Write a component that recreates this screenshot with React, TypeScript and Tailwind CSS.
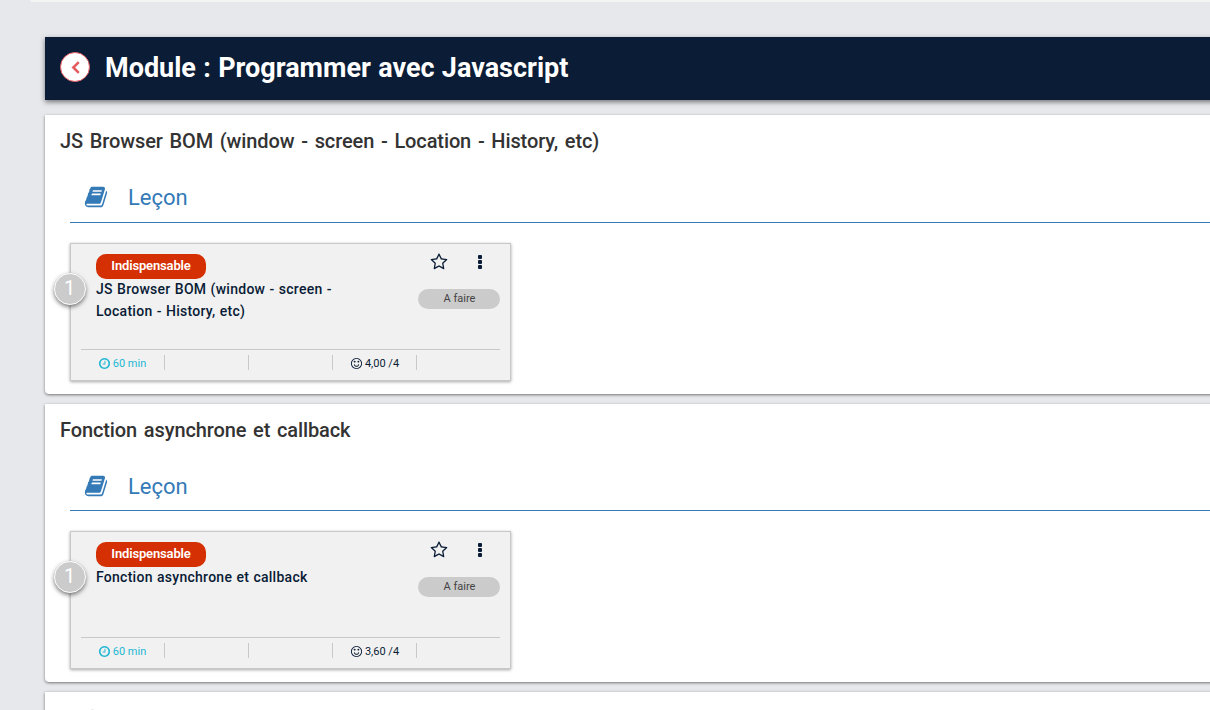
import React from "react";

const ICONS = {
  book: "M1703 478q40 57 18 129l-275 906q-19 64-76.5 107.5t-122.5 43.5h-923q-77 0-148.5-53.5t-99.5-131.5q-24-67-2-127 0-4 3-27t4-37q1-8-3-21.5t-3-19.5q2-11 8-21t16.5-23.5 16.5-23.5q23-38 45-91.5t30-91.5q3-10 .5-30t-.5-28q3-11 17-28t17-23q21-36 42-92t25-90q1-9-2.5-32t.5-28q4-13 22-30.5t22-22.5q19-26 42.5-84.5t27.5-96.5q1-8-3-25.5t-2-26.5q2-8 9-18t18-23 17-21q8-12 16.5-30.5t15-35 16-36 19.5-32 26.5-23.5 36-11.5 47.5 5.5l-1 3q38-9 51-9h761q74 0 114 56t18 130l-274 906q-36 119-71.5 153.5t-128.5 34.5h-869q-27 0-38 15-11 16-1 43 24 70 144 70h923q29 0 56-15.5t35-41.5l300-987q7-22 5-57 38 15 59 43zm-1064 2q-4 13 2 22.5t20 9.5h608q13 0 25.5-9.5t16.5-22.5l21-64q4-13-2-22.5t-20-9.5h-608q-13 0-25.5 9.5t-16.5 22.5zm-83 256q-4 13 2 22.5t20 9.5h608q13 0 25.5-9.5t16.5-22.5l21-64q4-13-2-22.5t-20-9.5h-608q-13 0-25.5 9.5t-16.5 22.5z",
  clock: "M1024 544v448q0 14-9 23t-23 9h-320q-14 0-23-9t-9-23v-64q0-14 9-23t23-9h224v-352q0-14 9-23t23-9h64q14 0 23 9t9 23zm416 352q0-148-73-273t-198-198-273-73-273 73-198 198-73 273 73 273 198 198 273 73 273-73 198-198 73-273zm224 0q0 209-103 385.5t-279.5 279.5-385.5 103-385.5-103-279.5-279.5-103-385.5 103-385.5 279.5-279.5 385.5-103 385.5 103 279.5 279.5 103 385.5z",
  smile: "M1262 1075q-37 121-138 195t-228 74-228-74-138-195q-8-25 4-48.5t38-31.5q25-8 48.5 4t31.5 38q25 80 92.5 129.5t151.5 49.5 151.5-49.5 92.5-129.5q8-26 32-38t49-4 37 31.5 4 48.5zm-494-435q0 53-37.5 90.5t-90.5 37.5-90.5-37.5-37.5-90.5 37.5-90.5 90.5-37.5 90.5 37.5 37.5 90.5zm512 0q0 53-37.5 90.5t-90.5 37.5-90.5-37.5-37.5-90.5 37.5-90.5 90.5-37.5 90.5 37.5 37.5 90.5zm256 256q0-130-51-248.5t-136.5-204-204-136.5-248.5-51-248.5 51-204 136.5-136.5 204-51 248.5 51 248.5 136.5 204 204 136.5 248.5 51 248.5-51 204-136.5 136.5-204 51-248.5zm128 0q0 209-103 385.5t-279.5 279.5-385.5 103-385.5-103-279.5-279.5-103-385.5 103-385.5 279.5-279.5 385.5-103 385.5 103 279.5 279.5 103 385.5z",
  star: "M1201 1004l306-297-422-62-189-382-189 382-422 62 306 297-73 421 378-199 377 199zm527-357q0 22-26 48l-363 354 86 500q1 7 1 20 0 50-41 50-19 0-40-12l-449-236-449 236q-22 12-40 12-21 0-31.5-14.5t-10.5-35.5q0-6 2-20l86-500-364-354q-25-27-25-48 0-37 56-46l502-73 225-455q19-41 49-41t49 41l225 455 502 73q56 9 56 46z",
};

function Icon({ name, className }: { name: keyof typeof ICONS; className: string }) {
  return (
    <svg viewBox="0 0 1792 1792" fill="currentColor" className={className} aria-hidden="true">
      <path d={ICONS[name]} />
    </svg>
  );
}

function Lesson({ title, score }: { title: string; score: string }) {
  return (
    <article className="relative ml-[25px] mt-5 flex h-[138px] w-[441px] flex-col border border-[#c8c8c8] bg-[#f1f1f1] px-2.5 shadow-[0_1px_3px_rgba(0,0,0,0.35)]">
      <span className="absolute -left-[17px] top-[29px] flex size-8 items-center justify-center rounded-full border border-white bg-[#cbcbcb] pb-0.5 pr-px text-xl leading-none text-white shadow-[0_2px_4px_rgba(0,0,0,0.5)]">
        1
      </span>
      <div className="flex h-[105px] justify-between">
        <div className="w-[260px] pl-[15px] pt-2.5">
          <div className="flex h-[25px] w-[110px] items-center justify-center rounded-[10px] bg-[#d53004] pb-px text-[13px] font-semibold tracking-[-0.15px] text-white">
            Indispensable
          </div>
          <h3 className="-mt-px text-sm font-medium leading-[22px] tracking-[0.27px] text-[#0a1c36] [word-spacing:0.5px]">{title}</h3>
        </div>
        <div className="w-[82px] pt-[9px]">
          <div className="flex items-center text-[#0a1c36]">
            <Icon name="star" className="ml-3 size-[18px]" />
            <svg viewBox="0 0 4 14" className="ml-[30px] h-[14px] w-1" fill="currentColor" aria-hidden="true">
              <rect width="4" height="4" rx="1" />
              <rect y="5" width="4" height="4" rx="1" />
              <rect y="10" width="4" height="4" rx="1" />
            </svg>
          </div>
          <div className="mt-[18px] flex h-5 items-center justify-center rounded-full bg-[#cbcbcb] pl-px text-[11px] text-[#444]">
            A faire
          </div>
        </div>
      </div>
      <footer className="flex h-[30px] items-start border-t border-[#c8c8c8] pt-[5px] text-[11px] leading-4">
        <div className="flex h-[15px] w-[84px] items-center justify-center gap-0.5 border-r border-[#c8c8c8] pr-px pt-0.5 text-[#23b7d3]">
          <Icon name="clock" className="size-[13px]" />
          60 min
        </div>
        <div className="h-[15px] w-[84px] border-r border-[#c8c8c8]" />
        <div className="h-[15px] w-[84px] border-r border-[#c8c8c8]" />
        <div className="flex h-[15px] w-[84px] items-center justify-center gap-0.5 border-r border-[#c8c8c8] pt-0.5 text-[#0a1c36]">
          <Icon name="smile" className="size-[13px]" />
          {score} /4
        </div>
      </footer>
    </article>
  );
}

function Section({ title, score, className, headingClass }: { title: string; score: string; className: string; headingClass: string }) {
  return (
    <section className={className}>
      <h2 className="pl-[15px] pt-[13px] text-[20px] font-medium leading-[26px] tracking-[-0.11px] text-[#333] [word-spacing:1.9px]">{title}</h2>
      <div className={headingClass}>
        <Icon name="book" className="size-6" />
        <span className="ml-5 text-[22px]">Leçon</span>
      </div>
      <Lesson title={title} score={score} />
    </section>
  );
}

export default function App() {
  return (
    <div className="h-[710px] w-[1210px] overflow-hidden bg-[#e7e8ec] font-['Roboto',sans-serif]">
      <div className="ml-[30px] h-0.5 rounded-bl bg-[#f3f4f4]" />
      <main className="ml-[45px] mt-[35px] w-[1180px]">
        <header className="flex h-[63px] items-center bg-[#0a1c36] pl-[15px] shadow-[0_2px_5px_rgba(0,0,0,0.5)]">
          <span className="mb-[3px] flex size-[30px] items-center justify-center rounded-full border border-[#e35b5f] bg-white text-[#e35b5f]">
            <svg viewBox="0 0 8 12" className="h-[13px] w-[9px]" fill="none" stroke="currentColor" strokeWidth="2.4" aria-hidden="true">
              <path d="M7 1 2 6l5 5" />
            </svg>
          </span>
          <h1 className="ml-[15px] text-[27px] font-bold text-white [word-spacing:0.6px]">Module : Programmer avec Javascript</h1>
        </header>
        <Section
          title="JS Browser BOM (window - screen - Location - History, etc)"
          score="4,00"
          className="mt-[15px] h-[279px] rounded-b-sm bg-white shadow-[0_1px_3px_rgba(0,0,0,0.5)]"
          headingClass="ml-[25px] mt-[18px] flex h-[51px] items-center border-b border-[#337ab7] pl-[14px] text-[#337ab7]"
        />
        <Section
          title="Fonction asynchrone et callback"
          score="3,60"
          className="mt-2.5 h-[278px] rounded-b-sm bg-white shadow-[0_1px_3px_rgba(0,0,0,0.5)]"
          headingClass="ml-[25px] mt-[18px] flex h-[50px] items-center border-b border-[#337ab7] pl-[14px] pt-px text-[#337ab7]"
        />
        <section className="mt-2.5 h-10 bg-white pl-[46px] pt-[17px] shadow-[0_1px_3px_rgba(0,0,0,0.5)]">
          <div className="h-px w-[3px] bg-[#eee]" />
        </section>
      </main>
    </div>
  );
}
